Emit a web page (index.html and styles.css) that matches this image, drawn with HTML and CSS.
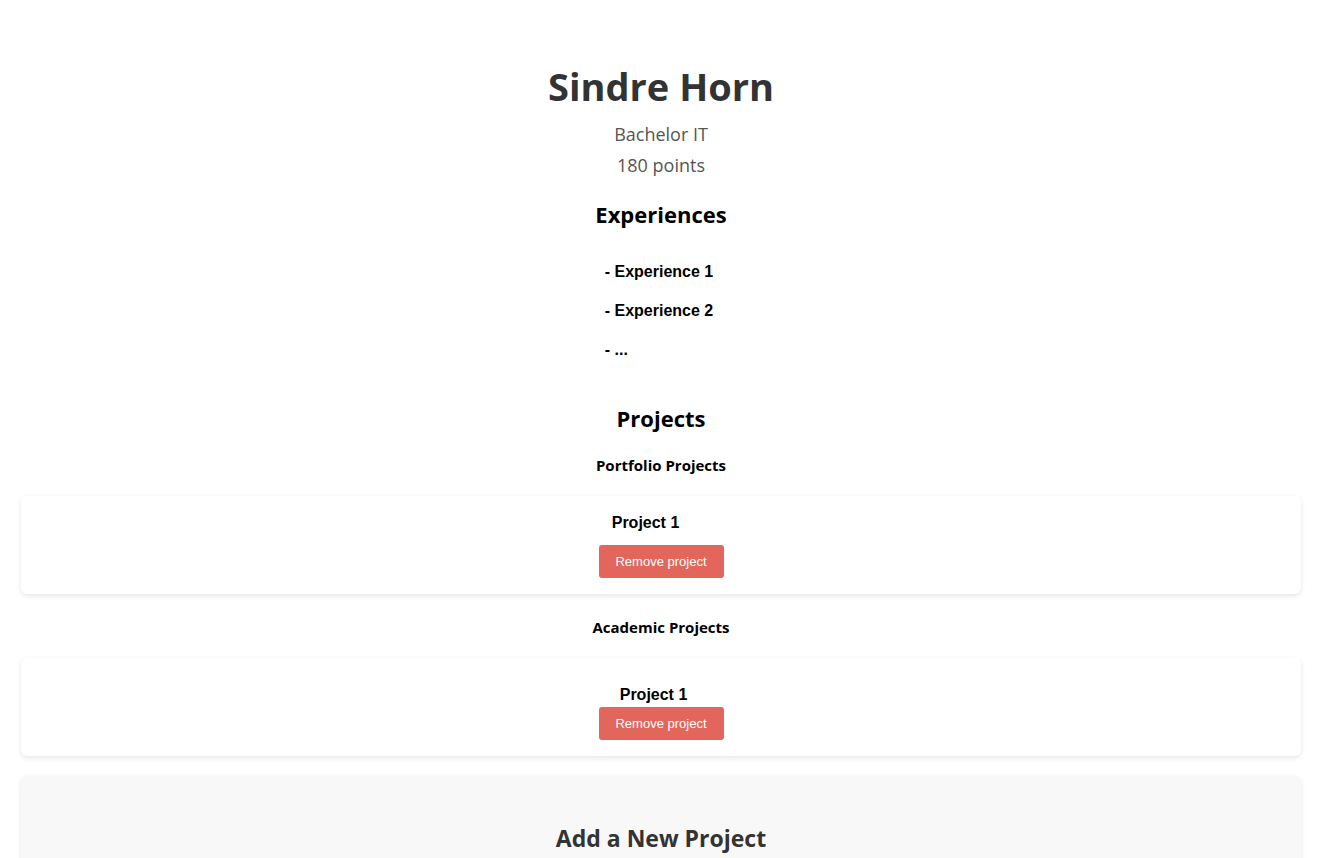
FILE: index.html
```html
<!DOCTYPE html>
<html lang="en">
<head>
<meta charset="utf-8">
<title>Sindre Horn</title>
<link rel="stylesheet" href="styles.css">
</head>
<body>
<div class="page">
  <header class="profile">
    <h1 class="name">Sindre Horn</h1>
    <p class="meta">Bachelor IT</p>
    <p class="meta">180 points</p>
  </header>

  <section class="experiences">
    <h2 class="section-title">Experiences</h2>
    <ul class="exp-list">
      <li>- Experience 1</li>
      <li>- Experience 2</li>
      <li>- ...</li>
    </ul>
  </section>

  <section class="projects">
    <h2 class="section-title projects-title">Projects</h2>
    <h3 class="group-title">Portfolio Projects</h3>
    <div class="card card-portfolio">
      <h4 class="project-title shift-a">Project 1</h4>
      <button class="remove-btn">Remove project</button>
    </div>
    <h3 class="group-title academic">Academic Projects</h3>
    <div class="card card-academic">
      <h4 class="project-title shift-b">Project 1</h4>
      <button class="remove-btn">Remove project</button>
    </div>
  </section>

  <section class="card add-card">
    <h2 class="add-title">Add a New Project</h2>
  </section>
</div>
</body>
</html>
```

FILE: styles.css
```css
html, body {
  margin: 0;
  padding: 0;
  background: #ffffff;
  height: 858px;
  overflow: hidden;
}

.page {
  width: 1321px;
  box-sizing: border-box;
  padding: 0 20px 0 21px;
  font-family: "Open Sans", "Noto Sans", sans-serif;
  text-align: center;
}

.profile {
  padding-top: 58px;
}

.name {
  margin: 0 0 5px 0;
  font-size: 38px;
  line-height: 56px;
  font-weight: 700;
  color: #333333;
}

.meta {
  margin: 0;
  font-size: 18px;
  line-height: 31px;
  color: #555555;
}

.section-title {
  margin: 0;
  font-size: 22px;
  line-height: 30px;
  font-weight: 700;
  color: #000000;
}

.experiences .section-title {
  margin-top: 18px;
}

.exp-list {
  display: inline-block;
  list-style: none;
  margin: 33px 4px 0 0;
  padding: 0;
  text-align: left;
  font-family: "Liberation Sans", Arial, sans-serif;
  font-weight: 700;
  font-size: 16px;
}

.exp-list li {
  line-height: 20px;
  margin-bottom: 19px;
}

.projects-title {
  margin-top: 24px;
}

.group-title {
  margin: 22px 0 0 0;
  font-size: 15px;
  line-height: 20px;
  font-weight: 700;
  color: #000000;
}

.group-title.academic {
  margin-top: 23px;
}

.card {
  background: #ffffff;
  border-radius: 6px;
  box-shadow: 0 2px 5px rgba(0, 0, 0, 0.1);
  display: flex;
  flex-direction: column;
  align-items: center;
  box-sizing: border-box;
}

.card-portfolio {
  margin-top: 21px;
  height: 98px;
  padding-top: 17px;
}

.card-academic {
  margin-top: 21px;
  height: 98px;
  padding-top: 27px;
}

.project-title {
  margin: 0;
  font-family: "Liberation Sans", Arial, sans-serif;
  font-size: 16px;
  line-height: 20px;
  font-weight: 700;
  color: #000000;
}

.shift-a {
  margin-right: 31px;
}

.shift-b {
  margin-right: 15px;
}

.card-portfolio .remove-btn {
  margin-top: 12px;
}

.card-academic .remove-btn {
  margin-top: 2px;
}

.remove-btn {
  width: 125px;
  height: 33px;
  border: none;
  border-radius: 3px;
  background: #e2665b;
  color: #ffffff;
  font-family: "Liberation Sans", Arial, sans-serif;
  font-size: 13px;
  padding: 0;
  cursor: pointer;
}

.add-card {
  margin-top: 20px;
  background: #f8f8f8;
  padding-top: 46px;
  height: 200px;
}

.add-title {
  margin: 0;
  font-size: 23px;
  line-height: 32px;
  font-weight: 700;
  color: #333333;
}
```
